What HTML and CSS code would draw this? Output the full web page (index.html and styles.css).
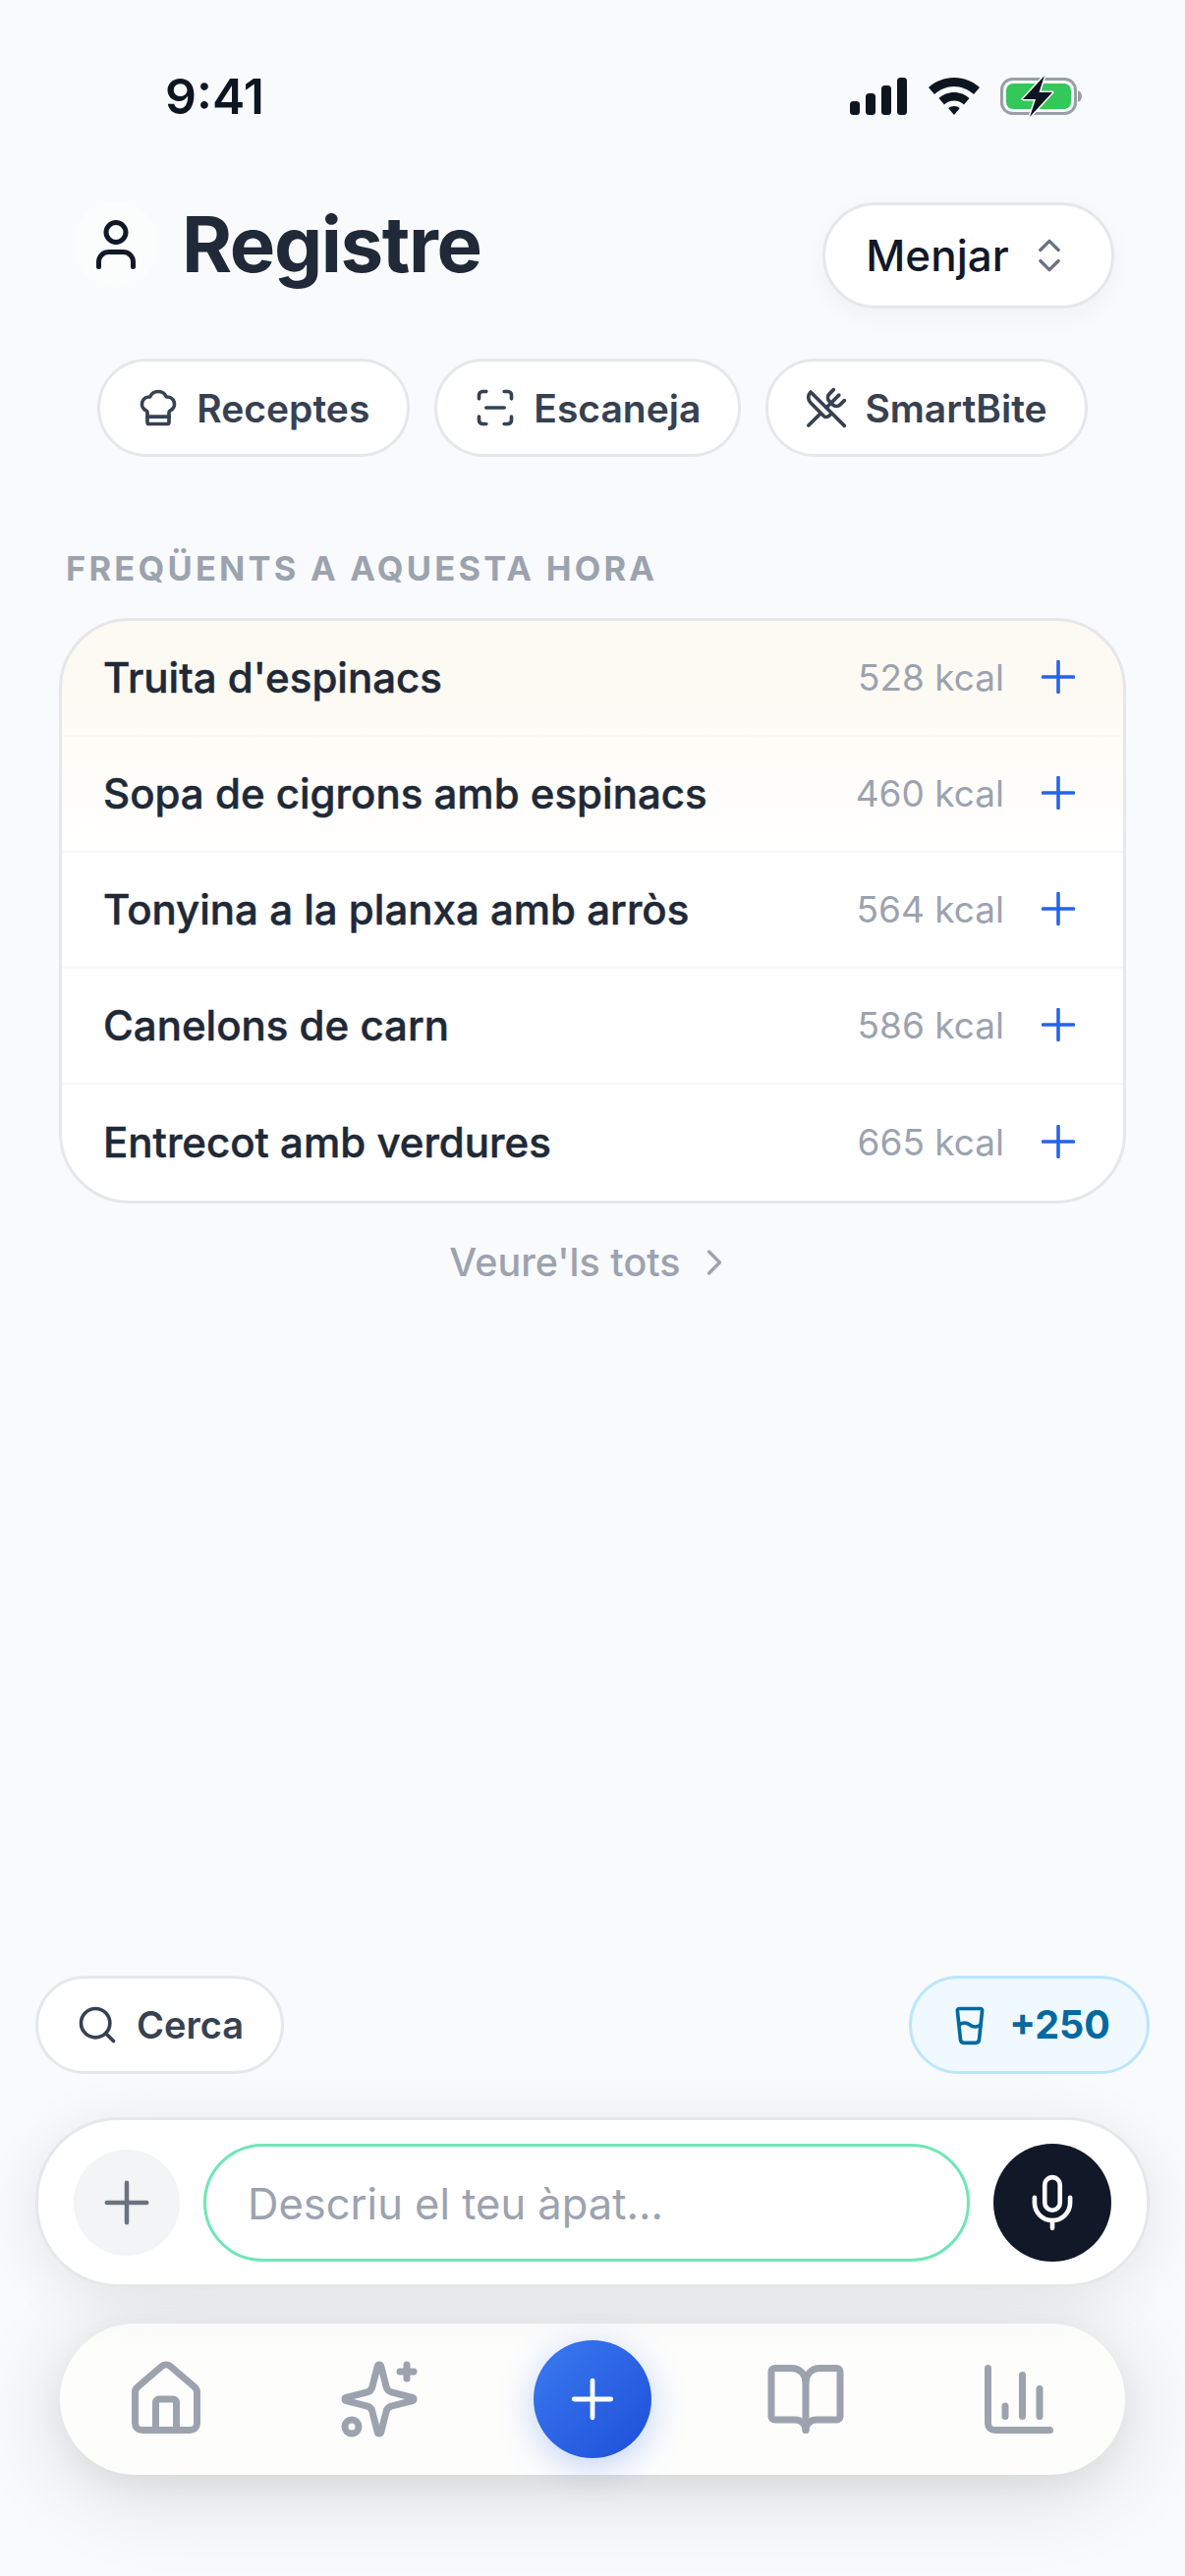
FILE: index.html
```html
<!DOCTYPE html>
<html lang="ca">
<head>
<meta charset="utf-8">
<title>Registre</title>
<link rel="stylesheet" href="styles.css">
</head>
<body>
<div class="page">
  <div class="status">
    <span class="time">9:41</span>
    <div class="status-icons">
      <svg class="signal" viewBox="0 0 58 38"><rect x="0" y="24" width="10" height="14" rx="3.500"/><rect x="16" y="16" width="10" height="22" rx="3.500"/><rect x="32" y="8" width="10" height="30" rx="3.500"/><rect x="48" y="0" width="10" height="38" rx="3.500"/></svg>
      <svg class="wifi" viewBox="0 0 52 38"><path d="M26 0c10 0 19 3.700 26 10l-6 7c-5.500-5-12.500-8-20-8S11.500 12 6 17L0 10C7 3.700 16 0 26 0z"/><path d="M26 15c6 0 11.500 2.200 15.500 6l-5.500 6.500c-2.700-2.500-6.200-4-10-4s-7.300 1.500-10 4L10.500 21C14.500 17.200 20 15 26 15z"/><path d="M26 29c2.200 0 4.200.8 5.700 2.200L26 38l-5.700-6.800C21.800 29.800 23.800 29 26 29z"/></svg>
      <svg class="battery" viewBox="0 0 84 42"><rect x="1.500" y="3.500" width="75" height="35" rx="11" fill="none" stroke="#9a9ea6" stroke-width="3"/><path d="M79 15c2.500 1 4 3.200 4 6s-1.500 5-4 6z" fill="#9a9ea6"/><rect x="6" y="8" width="66" height="26" rx="7" fill="#34c759"/><path d="M45 0 23 24h13l-6 18 23-25H39.500z" fill="#0d1520" stroke="#f9fafb" stroke-width="3" paint-order="stroke" stroke-linejoin="round"/></svg>
    </div>
  </div>

  <header class="header">
    <div class="title-group">
      <div class="avatar"><svg class="icon user-icon" viewBox="0 0 24 24"><path d="M19 21v-2a4 4 0 0 0-4-4H9a4 4 0 0 0-4 4v2"/><circle cx="12" cy="7" r="4"/></svg></div>
      <h1 class="title">Registre</h1>
    </div>
    <button class="meal-select"><span>Menjar</span><svg class="icon chevrons" viewBox="0 0 24 24"><path d="m7 15 5 5 5-5"/><path d="m7 9 5-5 5 5"/></svg></button>
  </header>

  <nav class="chips">
    <button class="chip"><svg class="icon chip-icon" viewBox="0 0 24 24"><path d="M17 21a1 1 0 0 0 1-1v-5.350c0-.457.316-.844.727-1.041a4 4 0 0 0-2.134-7.589 5 5 0 0 0-9.186 0 4 4 0 0 0-2.134 7.588c.411.198.727.585.727 1.041V20a1 1 0 0 0 1 1Z"/><path d="M6 17h12"/></svg>Receptes</button>
    <button class="chip"><svg class="icon chip-icon" viewBox="0 0 24 24"><path d="M3 7V5a2 2 0 0 1 2-2h2"/><path d="M17 3h2a2 2 0 0 1 2 2v2"/><path d="M21 17v2a2 2 0 0 1-2 2h-2"/><path d="M7 21H5a2 2 0 0 1-2-2v-2"/><path d="M7 12h10"/></svg>Escaneja</button>
    <button class="chip"><svg class="icon chip-icon" viewBox="0 0 24 24"><path d="m16 2-2.300 2.300a3 3 0 0 0 0 4.200l1.800 1.800a3 3 0 0 0 4.200 0L22 8"/><path d="M15 15 3.300 3.300a4.200 4.200 0 0 0 0 6l7.300 7.300c.7.700 2 .7 2.800 0L15 15Zm0 0 7 7"/><path d="m2.100 21.800 6.400-6.300"/><path d="m19 5-7 7"/></svg>SmartBite</button>
  </nav>

  <h2 class="section-label">FREQÜENTS A AQUESTA HORA</h2>

  <section class="card">
    <div class="row"><span class="food">Truita d'espinacs</span><span class="kcal">528 kcal</span><svg class="icon add" viewBox="0 0 24 24"><path d="M12 1v22M1 12h22"/></svg></div>
    <div class="row"><span class="food">Sopa de cigrons amb espinacs</span><span class="kcal">460 kcal</span><svg class="icon add" viewBox="0 0 24 24"><path d="M12 1v22M1 12h22"/></svg></div>
    <div class="row"><span class="food">Tonyina a la planxa amb arròs</span><span class="kcal">564 kcal</span><svg class="icon add" viewBox="0 0 24 24"><path d="M12 1v22M1 12h22"/></svg></div>
    <div class="row"><span class="food">Canelons de carn</span><span class="kcal">586 kcal</span><svg class="icon add" viewBox="0 0 24 24"><path d="M12 1v22M1 12h22"/></svg></div>
    <div class="row"><span class="food">Entrecot amb verdures</span><span class="kcal">665 kcal</span><svg class="icon add" viewBox="0 0 24 24"><path d="M12 1v22M1 12h22"/></svg></div>
  </section>

  <a class="see-all">Veure'ls tots<svg class="icon see-all-icon" viewBox="0 0 24 24"><path d="m9 18 6-6-6-6"/></svg></a>

  <div class="dock">
    <div class="quick">
      <button class="quick-btn"><svg class="icon quick-icon" viewBox="0 0 24 24"><circle cx="11" cy="11" r="8"/><path d="m21 21-4.300-4.300"/></svg>Cerca</button>
      <button class="quick-btn water"><svg class="icon quick-icon" viewBox="0 0 24 24"><path d="M5.116 4.104A1 1 0 0 1 6.110 3h11.780a1 1 0 0 1 .994 1.105L17.190 20.210A2 2 0 0 1 15.200 22H8.800a2 2 0 0 1-2-1.790z"/><path d="M6 12a5 5 0 0 1 6 0 5 5 0 0 0 6 0"/></svg>+250</button>
    </div>
    <div class="composer">
      <div class="attach"><svg class="icon attach-icon" viewBox="0 0 24 24"><path d="M12 3v18M3 12h18"/></svg></div>
      <div class="input">Descriu el teu àpat...</div>
      <div class="mic"><svg class="icon mic-icon" viewBox="0 0 24 24"><path d="M12 19v3"/><path d="M19 10v2a7 7 0 0 1-14 0v-2"/><rect x="9" y="2" width="6" height="13" rx="3"/></svg></div>
    </div>
    <div class="tabbar">
      <svg class="icon tab" viewBox="0 0 24 24"><path d="M15 21v-8a1 1 0 0 0-1-1h-4a1 1 0 0 0-1 1v8"/><path d="M3 10a2 2 0 0 1 .709-1.528l7-6a2 2 0 0 1 2.582 0l7 6A2 2 0 0 1 21 10v9a2 2 0 0 1-2 2H5a2 2 0 0 1-2-2z"/></svg>
      <svg class="icon tab" viewBox="0 0 24 24"><path d="M9.937 15.500A2 2 0 0 0 8.500 14.063l-6.135-1.582a.5.5 0 0 1 0-.962L8.500 9.936A2 2 0 0 0 9.937 8.500l1.582-6.135a.5.5 0 0 1 .963 0L14.063 8.500A2 2 0 0 0 15.500 9.937l6.135 1.581a.5.5 0 0 1 0 .964L15.500 14.063a2 2 0 0 0-1.437 1.437l-1.582 6.135a.5.5 0 0 1-.963 0z"/><path d="M20 2v4"/><path d="M22 4h-4"/><circle cx="4" cy="20" r="2"/></svg>
      <div class="fab"><svg class="icon fab-icon" viewBox="0 0 24 24"><path d="M12 3v18M3 12h18"/></svg></div>
      <svg class="icon tab" viewBox="0 0 24 24"><path d="M12 7v14"/><path d="M3 18a1 1 0 0 1-1-1V4a1 1 0 0 1 1-1h5a4 4 0 0 1 4 4 4 4 0 0 1 4-4h5a1 1 0 0 1 1 1v13a1 1 0 0 1-1 1h-6a3 3 0 0 0-3 3 3 3 0 0 0-3-3z"/></svg>
      <svg class="icon tab" viewBox="0 0 24 24"><path d="M3 3v16a2 2 0 0 0 2 2h16"/><path d="M18 17V9"/><path d="M13 17V5"/><path d="M8 17v-3"/></svg>
    </div>
  </div>
</div>
</body>
</html>
```

FILE: styles.css
```css
* { box-sizing: border-box; margin: 0; padding: 0; }
html, body { width: 1206px; height: 2622px; overflow: hidden; }
body { font-family: Inter, "Liberation Sans", sans-serif; color: #1f2937; background: #f9fafb; }
button { font: inherit; color: inherit; background: none; border: 0; }

.icon { fill: none; stroke: currentColor; stroke-width: 2; stroke-linecap: round; stroke-linejoin: round; flex: none; display: block; }

.page { height: 2622px; display: flex; flex-direction: column; }

.status { height: 126px; padding: 68px 104px 0 168px; display: flex; justify-content: space-between; align-items: flex-start; }
.time { font-size: 50px; font-weight: 600; line-height: 60px; color: #0d1520; }
.status-icons { display: flex; align-items: center; gap: 22px; padding-top: 9px; }
.signal { width: 58px; height: 38px; fill: #0d1520; }
.wifi { width: 52px; height: 38px; fill: #0d1520; }
.battery { width: 84px; height: 42px; margin-left: -1px; }

.header { height: 189px; padding: 80px 74px 0; display: flex; justify-content: space-between; align-items: flex-start; }
.title-group { display: flex; align-items: center; gap: 23px; height: 88px; margin-top: -1px; }
.avatar { width: 88px; height: 88px; border-radius: 50%; background: #fbfcfc; display: flex; align-items: center; justify-content: center; color: #111827; }
.user-icon { width: 60px; height: 60px; stroke-width: 2; }
.title { font-size: 78px; font-weight: 700; letter-spacing: -1.400px; line-height: 88px; color: #1f2937; }
.meal-select { width: 297px; height: 108px; margin-right: -2px; border: 3px solid #e5e7eb; border-radius: 54px; background: #fff; display: flex; align-items: center; justify-content: center; gap: 19px; font-size: 44px; font-weight: 500; color: #111827; box-shadow: 0 8px 24px rgba(0, 0, 0, .04); }
.chevrons { width: 44px; height: 44px; color: #6b7280; stroke-width: 1.800; }

.chips { height: 100px; margin-top: 50px; display: flex; justify-content: center; gap: 25px; }
.chip { height: 100px; padding: 0 38px 0 37px; border: 3px solid #e5e7eb; border-radius: 50px; background: #fff; display: flex; align-items: center; gap: 17px; font-size: 39px; font-weight: 600; color: #374151; }
.chip-icon { width: 44px; height: 44px; stroke-width: 2; }

.section-label { margin: 91px 0 0 67px; font-size: 34.500px; line-height: 46px; font-weight: 700; letter-spacing: 3.200px; color: #9ca3af; }

.card { margin: 27px 60px 0 60px; height: 596px; border: 3px solid #e5e7eb; border-radius: 72px; overflow: hidden; background: linear-gradient(180deg, #fdfaf3 0, #fdfaf3 12%, #ffffff 40%); }
.row { height: 118px; padding: 0 49px 2px 42px; display: flex; align-items: center; border-bottom: 2px solid #f8f8f8; }
.row:last-child { border-bottom: 0; }
.food { flex: 1; font-size: 42px; font-weight: 500; -webkit-text-stroke: .5px #1f2937; color: #1f2937; }
.kcal { font-size: 37px; color: #9ca3af; margin-right: 38px; }
.add { width: 34px; height: 34px; color: #2563eb; stroke-width: 2.500; }

.see-all { margin-top: 35px; display: flex; align-items: center; justify-content: center; gap: 12px; font-size: 39.500px; line-height: 50px; font-weight: 500; color: #9ca3af; }
.see-all-icon { width: 44px; height: 44px; stroke-width: 1.800; }

.dock { margin-top: auto; padding: 0 36px 103px; display: flex; flex-direction: column; }
.quick { display: flex; justify-content: space-between; height: 100px; }
.quick-btn { height: 100px; padding: 0 38px; border: 3px solid #e5e7eb; border-radius: 50px; background: #fff; display: flex; align-items: center; gap: 18px; font-size: 38px; font-weight: 600; color: #374151; }
.quick-icon { width: 44px; height: 44px; }
.water { padding: 0 37px; gap: 18px; font-size: 39.500px; font-weight: 700; background: #f0f9ff; border-color: #bae6fd; color: #0369a1; }

.composer { margin-top: 44px; height: 173px; padding: 0 36px; border: 3px solid #e5e7eb; border-radius: 84px; background: #fff; display: flex; align-items: center; box-shadow: 0 10px 60px rgba(0, 0, 0, .09); position: relative; z-index: 1; }
.attach { width: 108px; height: 108px; border-radius: 50%; background: #f3f4f6; display: flex; align-items: center; justify-content: center; color: #6b7280; }
.attach-icon { width: 54px; height: 54px; stroke-width: 2; }
.input { flex: 1; height: 120px; margin: 0 24px; padding: 2px 42px 0; border: 3px solid #6ee7b7; border-radius: 60px; background: #fff; display: flex; align-items: center; font-size: 43.500px; color: #9ca3af; }
.mic { width: 120px; height: 120px; border-radius: 50%; background: #111827; display: flex; align-items: center; justify-content: center; color: #fff; }
.mic-icon { width: 62px; height: 62px; stroke-width: 1.800; }

.tabbar { margin: 37px 25px 0; height: 154px; border-radius: 77px; background: #fdfdfc; display: grid; grid-template-columns: repeat(5, 1fr); align-items: center; justify-items: center; box-shadow: 0 14px 90px rgba(0, 0, 0, .15), 0 8px 30px rgba(0, 0, 0, .04); }
.tab { width: 84px; height: 84px; color: #9ca3af; }
.fab { width: 120px; height: 120px; border-radius: 50%; background: linear-gradient(135deg, #3b7bf0, #1d4ed8); display: flex; align-items: center; justify-content: center; color: #fff; box-shadow: 0 8px 36px rgba(37, 99, 235, .28); }
.fab-icon { width: 50px; height: 50px; stroke-width: 2.300; }
```
